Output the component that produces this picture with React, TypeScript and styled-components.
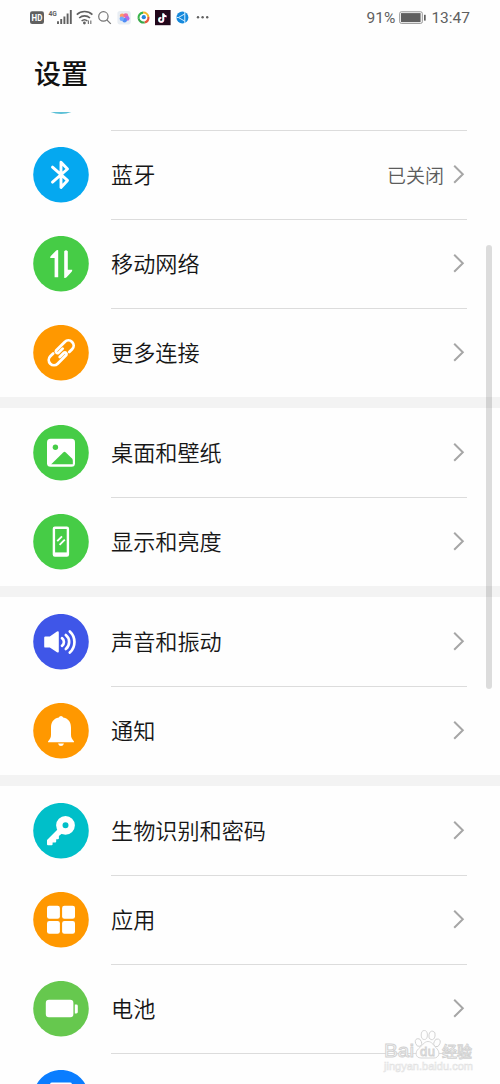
import React from "react";
import styled, { createGlobalStyle } from "styled-components";

const GlobalStyle = createGlobalStyle`
  * { box-sizing: border-box; }
  body {
    margin: 0;
    background: #fefefe;
    font-family: "Noto Sans CJK SC", sans-serif;
    overflow: hidden;
  }
`;

const Screen = styled.div`
  position: relative;
  width: 500px;
  height: 1084px;
  overflow: hidden;
  background: #fefefe;
`;

const StatusBar = styled.div`
  display: flex;
  justify-content: space-between;
  height: 36px;
  padding: 0 30px;
  color: #606060;
`;

const StatusGroup = styled.div`
  display: flex;
  align-items: center;
  height: 36px;
  font: 15.5px/36px Roboto, sans-serif;
`;

const Battery = styled.svg`
  margin: 0 5px 0 4px;
`;

const Title = styled.h1`
  height: 76px;
  margin: 0;
  padding-left: 34px;
  font-size: 27px;
  font-weight: 500;
  line-height: 73px;
  color: #111;
`;

const Peek = styled.div`
  height: 18px;
  padding-left: 33px;
  overflow: hidden;
`;

const PeekCircle = styled.div`
  width: 56px;
  height: 56px;
  margin-top: -54.4px;
  border-radius: 50%;
  background: #5cc0d6;
`;

const Section = styled.section`
  & + & {
    border-top: 11px solid #f3f3f3;
  }
`;

const Row = styled.div<{ $line?: boolean }>`
  display: flex;
  height: 89px;
  padding: 0 33px;
  background: ${(p) =>
    p.$line ? "linear-gradient(#dcdcdc, #dcdcdc) 111px 0 / 356px 1px no-repeat" : "none"};
`;

const Badge = styled.svg`
  flex: none;
  display: block;
  width: 56px;
  height: 56px;
  margin: 17px 22px 0 0;
`;

const Label = styled.span`
  flex: 1;
  font-size: 22.15px;
  font-weight: 350;
  line-height: 87px;
  color: #161616;
`;

const Value = styled.span`
  margin-right: 9px;
  font-size: 19px;
  font-weight: 350;
  line-height: 89px;
  color: #5c5c5c;
`;

const Chevron = styled.svg`
  flex: none;
  margin-top: 34px;
`;

const ScrollThumb = styled.div`
  position: absolute;
  left: 486px;
  top: 245px;
  width: 6px;
  height: 444px;
  border-radius: 3px;
  background: rgba(0, 0, 0, 0.135);
`;

const Watermark = styled.svg`
  position: absolute;
  left: 376px;
  top: 1022px;
`;

const icons: Record<string, React.ReactNode> = {
  bluetooth: (
    <path d="M19.5 20.3 34.5 33.6 28 40.6V15.4L34.5 22.2 19.5 35.3" fill="none" stroke="#fff" strokeWidth="2.9" strokeLinejoin="round" strokeLinecap="round" />
  ),
  network: (
    <path d="M25.2 14.5V41.5H21.6V22.2H17.2Q17 20.8 18.3 19.8L23.2 14.8Q24.3 14 25.2 14.5ZM31.2 15.5Q33 13.5 34.8 15.5V34H39.2Q39.4 35.4 38.2 36.4L33.6 41.5Q32.2 42.6 31.2 42Z" fill="#fff" />
  ),
  link: (
    <g transform="translate(28.2 28) rotate(-45)" fill="none" stroke="#fff" strokeWidth="2.8" strokeLinecap="round" strokeLinejoin="round">
      <path d="M-6.2 -5.2H-10.2A5.2 5.2 0 0 0 -10.2 5.2H2A1.7 1.7 0 0 0 2 1.9H-4" />
      <path d="M6.2 5.2H10.2A5.2 5.2 0 0 0 10.2 -5.2H-2A1.7 1.7 0 0 0 -2 -1.9H4" />
    </g>
  ),
  wallpaper: (
    <>
      <rect x="14" y="14" width="28" height="28" rx="3.5" fill="#fff" />
      <circle cx="22.4" cy="22.4" r="2.7" fill="#46cc46" />
      <path d="M18.2 39.5 30.2 27.6Q31.5 26.4 32.8 27.6L39 33.8Q39.8 34.8 39.8 36V39.5Z" fill="#46cc46" />
    </>
  ),
  display: (
    <g fill="none" stroke="#fff">
      <rect x="20.9" y="14" width="14" height="27.8" rx="1" strokeWidth="2.4" />
      <path d="M21 40.4H35" strokeWidth="3.6" />
      <path d="M24.2 27.4 29 22.6M26.6 31 31.8 25.8" strokeWidth="1.9" />
    </g>
  ),
  sound: (
    <>
      <path d="M11.2 23.8Q11.2 22.6 12.4 22.6H16.8L24 17.6Q25.8 16.8 25.8 18.6V37.6Q25.8 39.4 24 38.4L16.8 33.8H12.4Q11.2 33.8 11.2 32.6Z" fill="#fff" />
      <path d="M29 24.4A4.7 4.7 0 0 1 29 32M32.8 21.2A9 9 0 0 1 32.8 35.2M36.8 17.6A14.4 14.4 0 0 1 36.8 38.8" fill="none" stroke="#fff" strokeWidth="2.7" strokeLinecap="round" />
    </>
  ),
  bell: (
    <path d="M25.8 14.8A2.3 2.3 0 0 1 30.2 14.8C35.8 16 38 19.8 38 25V32C38 34.9 39 36.5 41 38.6V39.4H15V38.6C17 36.5 18 34.9 18 32V25C18 19.8 20.2 16 25.8 14.8ZM25 40.6H31Q30.2 43.2 28 43.2T25 40.6Z" fill="#fff" />
  ),
  key: (
    <>
      <path d="M26.2 26.4 15 37.6V41.4H18.6V38.8H22.2V35.4H24.9V32.8L30 28.6Z" fill="#fff" stroke="#fff" strokeWidth="2" strokeLinejoin="round" />
      <circle cx="32.5" cy="22.5" r="6.2" fill="none" stroke="#fff" strokeWidth="6.4" />
    </>
  ),
  apps: (
    <g fill="#fff">
      <rect x="14" y="14" width="12.9" height="12.9" rx="2.3" />
      <rect x="29.1" y="14" width="12.9" height="12.9" rx="2.3" />
      <rect x="14" y="29.1" width="12.9" height="12.9" rx="2.3" />
      <rect x="29.1" y="29.1" width="12.9" height="12.9" rx="2.3" />
    </g>
  ),
  battery: (
    <g fill="#fff">
      <rect x="12.8" y="19" width="27.6" height="17.4" rx="3.2" />
      <path d="M41.8 23.8H43.4Q44.8 23.8 44.8 25.2V31.2Q44.8 32.6 43.4 32.6H41.8Z" />
    </g>
  ),
  storage: <rect x="17" y="12.8" width="22" height="29" rx="2" fill="#fff" />,
};

type Item = { icon: string; color: string; label: string; value?: string };

const sections: Item[][] = [
  [
    { icon: "bluetooth", color: "#05a8f0", label: "蓝牙", value: "已关闭" },
    { icon: "network", color: "#46cc46", label: "移动网络" },
    { icon: "link", color: "#ff9800", label: "更多连接" },
  ],
  [
    { icon: "wallpaper", color: "#46cc46", label: "桌面和壁纸" },
    { icon: "display", color: "#46cc46", label: "显示和亮度" },
  ],
  [
    { icon: "sound", color: "#3f56e8", label: "声音和振动" },
    { icon: "bell", color: "#ff9800", label: "通知" },
  ],
  [
    { icon: "key", color: "#00bfc9", label: "生物识别和密码" },
    { icon: "apps", color: "#ff9800", label: "应用" },
    { icon: "battery", color: "#66c84e", label: "电池" },
    { icon: "storage", color: "#0a7dff", label: "" },
  ],
];

const StatusIcons = () => (
  <svg width="182" height="36" viewBox="30 0 182 36">
    <rect x="30" y="11.2" width="14" height="12.8" rx="2.2" fill="#606060" />
    <text x="31.6" y="21" fontSize="9.5" fontWeight="700" fill="#fff" textLength="10.8" lengthAdjust="spacingAndGlyphs">HD</text>
    <text x="48.5" y="16.4" fontSize="8" fontWeight="700" fill="#606060" textLength="8.4" lengthAdjust="spacingAndGlyphs">4G</text>
    <path d="M58 21.2V24M61.2 19V24M64.4 16.4V24M67.6 13.4V24M70.8 10V24" stroke="#606060" strokeWidth="1.9" />
    <g fill="none" stroke="#606060" strokeWidth="1.6">
      <path d="M76.8 14.6A11.4 11.4 0 0 1 92.4 14.6M79.2 18A7.8 7.8 0 0 1 90 18M81.6 21A4.4 4.4 0 0 1 87.4 21" />
    </g>
    <circle cx="84.4" cy="23" r="1.4" fill="#606060" />
    <path d="M88.4 20.6V24M90.8 20.6V24" stroke="#777" strokeWidth="1.2" />
    <g fill="none" stroke="#747474" strokeWidth="1.2">
      <circle cx="103.4" cy="16.4" r="4.7" />
      <path d="M106.8 19.8 110.8 23.8" />
    </g>
    <rect x="117.4" y="11" width="13.4" height="13.4" rx="2.6" fill="#e8edf3" />
    <circle cx="122.2" cy="15.8" r="2.4" fill="#ff9b69" />
    <circle cx="125.8" cy="15.6" r="2.4" fill="#ef6b9f" />
    <circle cx="127.2" cy="18.4" r="2.3" fill="#b36be8" />
    <circle cx="124.6" cy="20.2" r="2.3" fill="#4f8df4" />
    <circle cx="121.8" cy="18.8" r="2.2" fill="#6faaff" />
    <g fill="none" strokeWidth="2.1">
      <path d="M138.6 18.6A5 5 0 0 1 143 12.6" stroke="#39b54a" />
      <path d="M143 12.6A5 5 0 0 1 148.4 17" stroke="#f4b72b" />
      <path d="M148.4 17A5 5 0 0 1 144.6 22.4" stroke="#e8553b" />
      <path d="M144.6 22.4A5 5 0 0 1 138.6 18.6" stroke="#39a84a" />
    </g>
    <circle cx="143.8" cy="17.2" r="2.1" fill="#2684dc" />
    <rect x="155" y="10" width="15.6" height="15.2" fill="#21071b" />
    <g fill="none" strokeWidth="1.6">
      <path d="M162.9 13.2V19.6A2.1 2.1 0 1 1 160.8 17.5M162.9 13.6Q163.6 16 166 16.2" stroke="#35d8dd" />
      <path d="M163.7 13.6V20A2.1 2.1 0 1 1 161.6 17.9M163.7 14Q164.4 16.4 166.8 16.6" stroke="#ee4a70" />
      <path d="M163.3 13.4V19.8A2.1 2.1 0 1 1 161.2 17.7M163.3 13.8Q164 16.2 166.4 16.4" stroke="#fff" />
    </g>
    <circle cx="182.4" cy="17.5" r="6" fill="#1689dc" />
    <path d="M178.4 17.5 184.8 13.9V21.1ZM184.8 12V14M184.8 21V23M176.6 17.5H178.4" fill="none" stroke="#d6efff" strokeWidth="1" />
    <g fill="#606060">
      <circle cx="198" cy="17.2" r="1.2" />
      <circle cx="202.6" cy="17.2" r="1.2" />
      <circle cx="207.2" cy="17.2" r="1.2" />
    </g>
  </svg>
);

export default function App() {
  return (
    <Screen>
      <GlobalStyle />
      <StatusBar>
        <StatusGroup>
          <StatusIcons />
        </StatusGroup>
        <StatusGroup>
          91%
          <Battery width="27" height="14" viewBox="0 0 27 14">
            <rect x="0.7" y="0.8" width="22.6" height="11.6" rx="1.6" fill="none" stroke="#959595" strokeWidth="1" />
            <rect x="2" y="2.1" width="19.6" height="9" fill="#606060" />
            <rect x="25" y="3.8" width="1.7" height="5.8" fill="#606060" />
          </Battery>
          13:47
        </StatusGroup>
      </StatusBar>
      <Title>设置</Title>
      <Peek>
        <PeekCircle />
      </Peek>
      {sections.map((items, s) => (
        <Section key={s}>
          {items.map((item, i) => (
            <Row key={item.icon} $line={s === 0 || i > 0}>
              <Badge viewBox="0 0.2 56 56">
                <circle cx="28" cy="27.9" r="27.8" fill={item.color} />
                {icons[item.icon]}
              </Badge>
              <Label>{item.label}</Label>
              {item.value && <Value>{item.value}</Value>}
              <Chevron width="14" height="20" viewBox="0 0 14 20">
                <path d="M1.2 1.8 9.8 10.3 1.2 18.8" fill="none" stroke="#a6a6a6" strokeWidth="2" />
              </Chevron>
            </Row>
          ))}
        </Section>
      ))}
      <ScrollThumb />
      <Watermark width="110" height="56" viewBox="376 1022 110 56">
        <g fill="#fefefe" stroke="#d2d2d2" strokeWidth="0.9">
          <text x="384" y="1057" fontFamily="Liberation Sans, sans-serif" fontSize="18.5" fontWeight="400" textLength="30" lengthAdjust="spacingAndGlyphs">Bai</text>
          <ellipse cx="418.5" cy="1042.5" rx="3" ry="4" transform="rotate(-20 418.5 1042.5)" />
          <ellipse cx="424.3" cy="1035" rx="3.1" ry="4.5" />
          <ellipse cx="432" cy="1035.4" rx="3.1" ry="4.3" transform="rotate(12 432 1035.4)" />
          <ellipse cx="437" cy="1042.8" rx="3" ry="4" transform="rotate(20 437 1042.8)" />
          <path d="M428 1041.5C432 1041.5 434 1046 437 1048.8C440.5 1052.5 439 1058 434 1058H421C415 1058 415 1051.5 418.5 1048.8C422 1046 424 1041.5 428 1041.5Z" />
          <text x="420" y="1056" fontFamily="Liberation Sans, sans-serif" fontSize="13" fontWeight="400" textLength="15">du</text>
          <text x="442" y="1057" fontSize="15" fontWeight="500">经验</text>
        </g>
        <text x="384" y="1070" fontFamily="Liberation Sans, sans-serif" fontSize="11" fill="#fefefe" stroke="#e2e2e2" strokeWidth="0.6" textLength="89">jingyan.baidu.com</text>
      </Watermark>
    </Screen>
  );
}
